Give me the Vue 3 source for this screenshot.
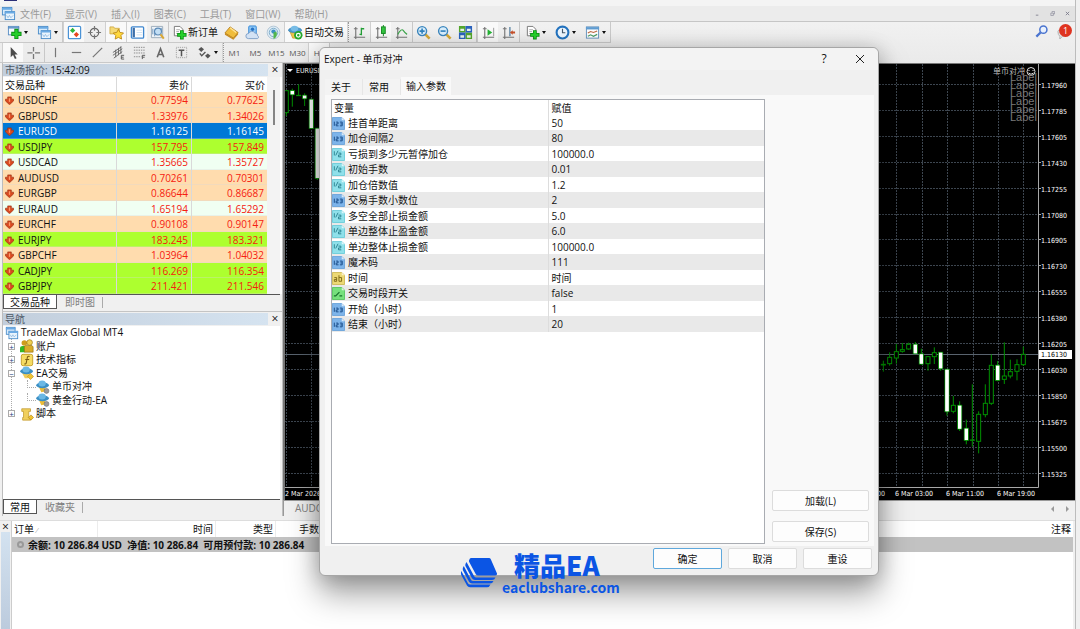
<script setup>
const menus = ['文件(F)', '显示(V)', '插入(I)', '图表(C)', '工具(T)', '窗口(W)', '帮助(H)']

const tools = [
  { icon: 'newchart', drop: true, label: '新图表' },
  { icon: 'profiles', drop: true, label: '配置' },
  { sep: true },
  { icon: 'watch', on: true, label: '市场报价' },
  { icon: 'target', label: '数据窗口' },
  { icon: 'star', on: true, label: '导航' },
  { icon: 'panel', on: true, label: '终端' },
  { icon: 'tester', label: '测试' },
  { sep: true },
  { icon: 'order', text: '新订单' },
  { icon: 'book', label: '编辑器' },
  { icon: 'cloud', label: '云' },
  { icon: 'signal', label: '信号' },
  { icon: 'auto', text: '自动交易', on: true },
  { sep: true, grip: true },
  { icon: 'bars', label: '柱状图' },
  { icon: 'candles', on: true, label: '蜡烛图' },
  { icon: 'linechart', label: '折线图' },
  { sep: true },
  { icon: 'zoomin', label: '放大' },
  { icon: 'zoomout', label: '缩小' },
  { icon: 'tiles', label: '平铺' },
  { sep: true },
  { icon: 'scroll', on: true, label: '自动滚动' },
  { icon: 'shift', label: '图表平移' },
  { sep: true },
  { icon: 'order', drop: true, label: '指标' },
  { icon: 'clock', drop: true, label: '时间周期' },
  { icon: 'template', drop: true, label: '模板' },
]

const drawTools = [
  { icon: 'cursor', on: true, label: '光标' },
  { icon: 'cross', label: '十字线' },
  { sep: true },
  { icon: 'vline', label: '垂直线' },
  { icon: 'hline', label: '水平线' },
  { icon: 'trend', label: '趋势线' },
  { icon: 'channel', label: '通道' },
  { icon: 'fib', label: '斐波那契' },
  { icon: 'text', label: '文字' },
  { icon: 'textbox', label: '文字标签' },
  { icon: 'arrows', drop: true, label: '箭头' },
  { sep: true, grip: true },
]
const frames = ['M1', 'M5', 'M15', 'M30', 'H1']

const quotes = [
  ['USDCHF', '0.77594', '0.77625', 'peach'],
  ['GBPUSD', '1.33976', '1.34026', 'peach'],
  ['EURUSD', '1.16125', '1.16145', 'picked'],
  ['USDJPY', '157.795', '157.849', 'lime'],
  ['USDCAD', '1.35665', '1.35727', 'mint'],
  ['AUDUSD', '0.70261', '0.70301', 'peach'],
  ['EURGBP', '0.86644', '0.86687', 'peach'],
  ['EURAUD', '1.65194', '1.65292', 'mint'],
  ['EURCHF', '0.90108', '0.90147', 'peach'],
  ['EURJPY', '183.245', '183.321', 'lime'],
  ['GBPCHF', '1.03964', '1.04032', 'peach'],
  ['CADJPY', '116.269', '116.354', 'lime'],
  ['GBPJPY', '211.421', '211.546', 'lime'],
]

const tree = [
  { t: 'TradeMax Global MT4', icon: 'profiles', level: 0 },
  { t: '账户', icon: 'users', level: 1, box: '+' },
  { t: '技术指标', icon: 'func', level: 1, box: '+' },
  { t: 'EA交易', icon: 'expert', level: 1, box: '-' },
  { t: '单币对冲', icon: 'expertgrey', level: 2 },
  { t: '黄金行动-EA', icon: 'expertgrey', level: 2 },
  { t: '脚本', icon: 'script', level: 1, box: '+' },
]

const params = [
  ['int', '挂首单距离', '50'],
  ['int', '加仓间隔2', '80'],
  ['dbl', '亏损到多少元暂停加仓', '100000.0'],
  ['dbl', '初始手数', '0.01'],
  ['dbl', '加仓倍数值', '1.2'],
  ['int', '交易手数小数位', '2'],
  ['dbl', '多空全部止损金额', '5.0'],
  ['dbl', '单边整体止盈金额', '6.0'],
  ['dbl', '单边整体止损金额', '100000.0'],
  ['int', '魔术码', '111'],
  ['str', '时间', '时间'],
  ['bool', '交易时段开关', 'false'],
  ['int', '开始（小时）', '1'],
  ['int', '结束（小时）', '20'],
]

const prices = ['1.17960', '1.17785', '1.17605', '1.17430', '1.17255', '1.17080', '1.16905', '1.16730',
  '1.16555', '1.16380', '1.16205', '1.16030', '1.15850', '1.15675', '1.15500', '1.15325']
const priceY = i => Math.round(20 + i * 25.9) + 0.5
const gridX = Array.from({ length: 30 }, (_, i) => Math.round(1 + i * 25.43) + 0.5)

// [x, high, bodyTop, bodyBottom, low, falling]
const leftCandles = [
  [859, 92, 92, 158, 168, 0], [877, 86, 92, 104, 140, 1], [896, 73, 106, 107, 108, 0],
  [914, 100, 106, 116, 138, 1], [934, 118, 118, 205, 205, 1], [952, 205, 205, 355, 360, 1],
]
const rightCandles = [
  [40, 122, 133, 135, 155, 0], [59, 97, 112, 131, 137, 0], [79, 72, 95, 114, 131, 0],
  [97, 69, 89, 94, 98, 0], [116, 68, 73, 87, 89, 0], [136, 66, 73, 101, 101, 1],
  [154, 86, 102, 132, 135, 1], [174, 110, 110, 131, 152, 0], [193, 82, 98, 110, 132, 0],
  [212, 97, 97, 146, 152, 1], [231, 148, 148, 275, 287, 1], [250, 228, 256, 274, 280, 0],
  [269, 244, 256, 327, 333, 1], [289, 299, 325, 361, 373, 1], [307, 193, 360, 361, 380, 0],
  [326, 274, 283, 364, 400, 0], [346, 193, 250, 284, 292, 0], [364, 103, 136, 250, 255, 0],
  [383, 123, 136, 181, 184, 1], [403, 67, 168, 178, 192, 0], [421, 119, 155, 168, 175, 0],
  [441, 118, 134, 154, 181, 0], [460, 80, 103, 134, 138, 0],
]
</script>

<template>
  <svg class="defs" aria-hidden="true">
    <symbol id="i-newchart" viewBox="0 0 16 16">
      <rect x="1.5" y="1.500" width="11" height="9" fill="#f4f9fe" stroke="#5a8fc4" />
      <path d="M1 3h12" stroke="#5a8fc4" stroke-width="1.500" />
      <path d="M10 4v11M4.500 9.500h11" stroke="#0a8f12" stroke-width="4.400" />
      <path d="M10 5v9M5.500 9.500h9" stroke="#25cf2b" stroke-width="2.600" />
    </symbol>
    <symbol id="i-profiles" viewBox="0 0 16 16">
      <rect x="1.500" y="1.500" width="10" height="8" fill="#d8ebfb" stroke="#4a8cc9" />
      <rect x="4.500" y="6" width="10" height="8.500" fill="#e9f4fd" stroke="#4a8cc9" />
      <path d="M1 3h11M4 7h11" stroke="#6aaae4" stroke-width="2" />
      <path d="M6 10l1.500 2.500L9 10l1.500 2.500L13 10" fill="none" stroke="#85b3dc" stroke-width=".8" />
    </symbol>
    <symbol id="i-watch" viewBox="0 0 16 16">
      <rect x="1.500" y="1.500" width="13" height="13" rx="1" fill="#fff" stroke="#4b93d6" stroke-width="1.300" />
      <path d="M6 3l2.800 2.800L6 8.600 3.200 5.800z" fill="#2fb53b" />
      <path d="M10 7.400l2.800 2.800L10 13l-2.800-2.800z" fill="#e8461e" />
    </symbol>
    <symbol id="i-target" viewBox="0 0 16 16">
      <circle cx="8" cy="8" r="4.500" fill="none" stroke="#666" stroke-width="1.300" />
      <path d="M8 1v5M8 10v5M1 8h5M10 8h5" stroke="#777" stroke-width="1.300" />
    </symbol>
    <symbol id="i-star" viewBox="0 0 16 16">
      <path d="M1 2h4l1 1.500h5v6H1z" fill="#f5da76" stroke="#c9a13a" stroke-width=".8" />
      <path d="M10 4.500l1.700 3.400 3.800.6-2.700 2.700.6 3.800-3.400-1.800L6.600 15l.6-3.800L4.500 8.500l3.800-.6z" fill="#ffd83d" stroke="#b98512" stroke-width=".9" />
    </symbol>
    <symbol id="i-panel" viewBox="0 0 16 16">
      <rect x="1.500" y="2" width="13" height="12" rx="1" fill="#fff" stroke="#3f87cf" stroke-width="1.400" />
      <path d="M4 3v10" stroke="#3d6fa9" stroke-width="2.500" />
      <path d="M7 5.500h6M7 8h6M7 10.500h6" stroke="#cfe1f2" />
    </symbol>
    <symbol id="i-tester" viewBox="0 0 16 16">
      <path d="M1.500 1.500h12v12h-12z" fill="#eef3f8" stroke="#9aabba" />
      <path d="M3 10V4M5 12V6M12 7V3" stroke="#6d95bd" />
      <circle cx="8.500" cy="7" r="3.700" fill="#c3dff5" stroke="#5a89b6" stroke-width="1.200" />
      <path d="M11.200 10l3.500 4.500" stroke="#dba733" stroke-width="2.200" />
    </symbol>
    <symbol id="i-order" viewBox="0 0 16 16">
      <path d="M2.500 1.500h6l3 3v7h-9z" fill="#fff" stroke="#777" />
      <path d="M4.500 5h4M4.500 7h3M4.500 9h2" stroke="#9a9a9a" stroke-width=".8" />
      <path d="M10.500 5.500v10M5.500 10.500h10" stroke="#0a8f12" stroke-width="4" />
      <path d="M10.500 6.500v8M6.500 10.500h8" stroke="#25cf2b" stroke-width="2.400" />
    </symbol>
    <symbol id="i-book" viewBox="0 0 16 16">
      <path d="M6.500 2L15 8l-5 6L1 8.500z" fill="#f0bd3c" stroke="#b27a16" stroke-width=".9" />
      <path d="M1 8.500l9 5.500 5-6v2L10 15.800 1 10.500z" fill="#c78c21" />
      <path d="M6.500 3L13 8" stroke="#ffe394" stroke-width="1.500" />
    </symbol>
    <symbol id="i-cloud" viewBox="0 0 16 16">
      <rect x="4" y="1" width="8" height="9" rx="1" fill="#8fc8f6" stroke="#2f86d6" />
      <circle cx="8" cy="4.500" r="1.800" fill="#2873c4" />
      <path d="M3.500 14.500a2.700 2.700 0 01.3-5.400A3.800 3.800 0 0110.500 8.500a3 3 0 013 3 1.600 1.600 0 01-.3 3z" fill="#d3e2f4" stroke="#7e9fc8" />
    </symbol>
    <symbol id="i-signal" viewBox="0 0 16 16">
      <circle cx="8" cy="8" r="6.800" fill="#dcebf5" stroke="#a3b9cc" stroke-width=".8" />
      <circle cx="8" cy="8" r="4.500" fill="none" stroke="#7dabc9" />
      <circle cx="8" cy="7" r="2.300" fill="#3c90c4" />
      <path d="M8 8l3-1a6 6 0 01-3 8z" fill="#51b64d" />
    </symbol>
    <symbol id="i-auto" viewBox="0 0 16 16">
      <path d="M2 7h10l-2 7H5z" fill="#eec448" stroke="#b48a1b" stroke-width=".6" />
      <ellipse cx="7.500" cy="5.500" rx="7" ry="2.800" fill="#4c9bd0" stroke="#2e77ab" stroke-width=".6" />
      <ellipse cx="7" cy="3.800" rx="4" ry="3" fill="#77bce6" />
      <circle cx="11" cy="11" r="4.500" fill="#24a82c" />
      <circle cx="11" cy="11" r="2" fill="none" stroke="#fff" stroke-width="1.300" />
    </symbol>
    <symbol id="i-bars" viewBox="0 0 16 16">
      <path d="M4 2v13M2 13h12M2 4h4" stroke="#777" stroke-width="1.200" />
      <path d="M10 3v8M8 10h2M10 4h3" stroke="#24a037" stroke-width="1.400" />
    </symbol>
    <symbol id="i-candles" viewBox="0 0 16 16">
      <path d="M4 2v13M2 13h12M2 4h4" stroke="#777" stroke-width="1.200" />
      <path d="M10 0v12" stroke="#178a23" /><rect x="8" y="2" width="4" height="7" fill="#35c541" stroke="#178a23" />
    </symbol>
    <symbol id="i-linechart" viewBox="0 0 16 16">
      <path d="M4 2v13M2 13h12M2 4h4" stroke="#777" stroke-width="1.200" />
      <path d="M4 10q4-7 6-4t4 4" fill="none" stroke="#3da64b" stroke-width="1.200" />
    </symbol>
    <symbol id="i-zoomin" viewBox="0 0 16 16">
      <path d="M10 10l4.500 4.500" stroke="#d5a835" stroke-width="2.800" />
      <circle cx="6.500" cy="6.500" r="4.800" fill="#d8edfb" stroke="#3b86bd" stroke-width="1.500" />
      <path d="M6.500 3.800v5.400M3.800 6.500h5.400" stroke="#2f82bd" stroke-width="1.700" />
    </symbol>
    <symbol id="i-zoomout" viewBox="0 0 16 16">
      <path d="M10 10l4.500 4.500" stroke="#d5a835" stroke-width="2.800" />
      <circle cx="6.500" cy="6.500" r="4.800" fill="#d8edfb" stroke="#3b86bd" stroke-width="1.500" />
      <path d="M3.800 6.500h5.400" stroke="#2f82bd" stroke-width="1.700" />
    </symbol>
    <symbol id="i-tiles" viewBox="0 0 16 16">
      <path d="M1 1h7v7H1zM8 8h7v7H8z" fill="#53a62c" /><path d="M8 1h7v7H8zM1 8h7v7H1z" fill="#2b62bd" />
      <path d="M2.500 4h4v2.500h-4zM9.500 4h4v2.500h-4zM2.500 11h4v2.500h-4zM9.500 11h4v2.500h-4z" fill="#e6f2e8" />
    </symbol>
    <symbol id="i-scroll" viewBox="0 0 16 16">
      <path d="M4 2v13M2 13h12M2 4h4" stroke="#777" stroke-width="1.200" />
      <path d="M13.500 3v9" stroke="#999" /><path d="M7 4.500l5 3.500-5 3.500z" fill="#26b336" />
    </symbol>
    <symbol id="i-shift" viewBox="0 0 16 16">
      <path d="M4 2v13M2 13h12M2 4h4" stroke="#777" stroke-width="1.200" />
      <path d="M9.500 2v10" stroke="#4d7a9c" stroke-width="1.300" /><path d="M9.500 8l3-2.500V7H15v2h-2.500v1.500z" fill="#c6502b" />
    </symbol>
    <symbol id="i-clock" viewBox="0 0 16 16">
      <circle cx="8" cy="8" r="6.300" fill="#edf6fe" stroke="#2373bf" stroke-width="2.200" />
      <path d="M8 4v4.300h3" fill="none" stroke="#44596c" stroke-width="1.200" />
    </symbol>
    <symbol id="i-template" viewBox="0 0 16 16">
      <rect x="1.500" y="2" width="13" height="12" fill="#fff" stroke="#6393bd" />
      <path d="M1 3.500h14" stroke="#5f9cd1" stroke-width="2.500" />
      <path d="M3 8.500l3-1.500 3 1 4-1.500" fill="none" stroke="#c06943" stroke-width="1.200" />
      <path d="M3 12l3-1.500 3 1.500 4-2" fill="none" stroke="#4b9c66" stroke-width="1.200" />
    </symbol>
    <symbol id="i-cursor" viewBox="0 0 16 16"><path d="M5 2v11l2.500-2.300L9.500 15l1.800-.9-2-4L12.500 10z" fill="#4b4b4b" /></symbol>
    <symbol id="i-cross" viewBox="0 0 16 16"><path d="M8 2v5M8 9.500V15M1.500 8.300H7M9.500 8.300H15" stroke="#777" stroke-width="1.400" /></symbol>
    <symbol id="i-vline" viewBox="0 0 16 16"><path d="M8 3v10" stroke="#777" stroke-width="1.300" /></symbol>
    <symbol id="i-hline" viewBox="0 0 16 16"><path d="M3 8h10" stroke="#777" stroke-width="1.300" /></symbol>
    <symbol id="i-trend" viewBox="0 0 16 16"><path d="M3 13L13 3" stroke="#777" stroke-width="1.300" /></symbol>
    <symbol id="i-channel" viewBox="0 0 16 16">
      <path d="M2 8l9-6M2 11l10-7M3 14l9-7M5 5v8M8 3v8M10.500 1.500v8" stroke="#666" />
      <path d="M14 11h-3v4h3M11 13h2.500" fill="none" stroke="#555" />
    </symbol>
    <symbol id="i-fib" viewBox="0 0 16 16">
      <path d="M2 2.500h12M2 5.500h12M2 8.500h12M2 12.500h8" stroke="#888" stroke-dasharray="1.500 1" />
      <path d="M14 11h-3v4M11 13h2.500" fill="none" stroke="#555" />
    </symbol>
    <symbol id="i-text" viewBox="0 0 16 16"><path d="M4.500 13L8 4l3.500 9M5.800 10.200h4.500" fill="none" stroke="#666" stroke-width="1.700" /></symbol>
    <symbol id="i-textbox" viewBox="0 0 16 16">
      <rect x="2.500" y="2.500" width="11" height="11" fill="none" stroke="#999" stroke-dasharray="1 1" />
      <path d="M5 5.500h6M8 5.500V12" stroke="#555" stroke-width="1.600" />
    </symbol>
    <symbol id="i-arrows" viewBox="0 0 16 16">
      <path d="M4.500 2L7.500 4.500 4.500 7.500 1.500 4.500z" fill="#555" /><path d="M3 9l2 2.500 4-4" fill="none" stroke="#555" stroke-width="1.400" />
      <path d="M11.500 9l3 2.500-3 3-3-3z" fill="#555" />
    </symbol>
    <symbol id="i-users" viewBox="0 0 16 16">
      <path d="M0 15V10q0-2 3-2h3v7z" fill="#36b824" /><circle cx="5" cy="4.500" r="3.200" fill="#cf9d1d" />
      <path d="M5 15V9q0-2 5-2t5 2v6z" fill="#d9ab28" stroke="#936c0d" stroke-width=".7" />
      <circle cx="11" cy="4" r="3.200" fill="#f0cf50" stroke="#936c0d" stroke-width=".7" />
    </symbol>
    <symbol id="i-func" viewBox="0 0 16 16">
      <rect x="1.500" y="1.500" width="13" height="13" rx="2" fill="#f5db63" stroke="#c49d24" />
      <path d="M11 4q-2.500-1-2.800 2l-1 5q-.4 2-2.200 1.300M6 7.500h4.500" fill="none" stroke="#7a5d12" stroke-width="1.200" />
    </symbol>
    <symbol id="i-expert" viewBox="0 0 16 16">
      <path d="M2 7h9l-2 7H5.500z" fill="#f0cc5a" />
      <ellipse cx="7.500" cy="6" rx="7.300" ry="3.300" fill="#3b8fc4" /><ellipse cx="7" cy="4" rx="4.200" ry="3.300" fill="#6bb8e4" />
      <path d="M12 8.500l3.500 3.500-3.500 3.500L8.500 12z" fill="#efc331" stroke="#b98b16" stroke-width=".7" />
    </symbol>
    <symbol id="i-expertgrey" viewBox="0 0 16 16">
      <path d="M3 7h8l-1 6-4 1z" fill="#edbd37" />
      <ellipse cx="7.500" cy="6" rx="7.300" ry="3.300" fill="#3b8fc4" /><ellipse cx="7" cy="4" rx="4.200" ry="3.300" fill="#6bb8e4" />
      <circle cx="12" cy="12.500" r="2.800" fill="#9b9b9b" stroke="#6f6f6f" stroke-width=".7" />
    </symbol>
    <symbol id="i-script" viewBox="0 0 16 16">
      <path d="M2 2h10v3h-2v7h2v3H3v-3h1V5H2z" fill="#f0cf5d" stroke="#bd9427" stroke-width=".8" />
      <path d="M12.500 9l3 3-3 3-3-3z" fill="#efc331" stroke="#a97d10" stroke-width=".7" />
    </symbol>
    <symbol id="i-int" viewBox="0 0 14 14">
      <path d="M.5.5h10l3 3v10H.5z" fill="#7db4ea" stroke="#6ba3da" /><path d="M10.500.5v3h3" fill="#d7e9fa" />
      <path d="M2.500 5v4.500M4.500 5.500h2v2h-2v2h2.500M8.500 5.500h2.500v4H8.500M9 7.500h2" fill="none" stroke="#174a86" />
    </symbol>
    <symbol id="i-dbl" viewBox="0 0 14 14">
      <path d="M.5.5h10l3 3v10H.5z" fill="#8fe0ea" stroke="#6acbd8" /><path d="M10.500.5v3h3" fill="#dcf8fb" />
      <path d="M2.500 3.500v4.500M4 8l2.500-5M7 5.500h2.500v2H7v2h3" fill="none" stroke="#28818f" />
    </symbol>
    <symbol id="i-str" viewBox="0 0 14 14">
      <path d="M.5.5h10l3 3v10H.5z" fill="#ecd975" stroke="#cdb954" /><path d="M10.500.5v3h3" fill="#fbf4cb" />
      <path d="M2.500 6h2.500v4H2.500V8H5M7.500 3.500V10h2.800V6H7.500" fill="none" stroke="#7b6713" />
    </symbol>
    <symbol id="i-bool" viewBox="0 0 14 14">
      <path d="M.5.5h10l3 3v10H.5z" fill="#76e07c" stroke="#56c45f" /><path d="M10.500.5v3h3" fill="#d4f8d6" />
      <path d="M2 9.500h2l4-4M8 9.500h3" fill="none" stroke="#16702a" stroke-width="1.300" />
    </symbol>
    <symbol id="i-down" viewBox="0 0 10 10">
      <path d="M3 1h4v2.500h2.500v2L5 9.700.5 5.500v-2H3z" fill="#d8481f" stroke="#9c3113" stroke-width=".7" />
      <path d="M5 2.500v4" fill="none" stroke="#ff9a6c" stroke-width="1.500" />
    </symbol>
  </svg>

  <div class="window">
    <div class="titlebar"><span class="appmark"></span></div>
    <nav class="menubar">
      <svg class="ico"><use href="#i-profiles" /></svg>
      <button v-for="m in menus" :key="m">{{ m }}</button>
      <div class="winbtns">
        <button aria-label="最小化"><svg viewBox="0 0 6 6"><path d="M1 5h3" stroke="#778" /></svg></button>
        <button aria-label="还原"><svg viewBox="0 0 6 6"><path d="M1 2.500h3v3H1zM2.500 2V.5h3v3H4" fill="none" stroke="#889" stroke-width=".8" /></svg></button>
        <button aria-label="关闭"><svg viewBox="0 0 6 6"><path d="M1 1l4 4M5 1L1 5" stroke="#778" /></svg></button>
      </div>
    </nav>

    <div class="bars">
      <div class="toolbar">
        <template v-for="(t, i) in tools" :key="i">
          <span v-if="t.sep" class="sep" :class="{ grip: t.grip }"></span>
          <button v-else :class="{ on: t.on, drop: t.drop, worded: t.text }" :aria-label="t.label || t.text">
            <svg class="ico"><use :href="'#i-' + t.icon" /></svg>
            <span v-if="t.text">{{ t.text }}</span>
            <i v-if="t.drop" class="caret"></i>
          </button>
        </template>
      </div>
      <div class="toolbar second">
        <template v-for="(t, i) in drawTools" :key="i">
          <span v-if="t.sep" class="sep" :class="{ grip: t.grip }"></span>
          <button v-else :class="{ on: t.on, drop: t.drop }" :aria-label="t.label">
            <svg class="ico"><use :href="'#i-' + t.icon" /></svg>
            <i v-if="t.drop" class="caret"></i>
          </button>
        </template>
        <button v-for="f in frames" :key="f" class="frame" :class="{ on: f === 'H1' }">{{ f }}</button>
      </div>
      <div class="corner">
        <button aria-label="搜索">
          <svg class="ico" viewBox="0 0 16 16"><circle cx="10" cy="6" r="3.800" fill="#e9f1fd" stroke="#4a74cf" stroke-width="1.600" /><path d="M7 9l-4.500 4.500" stroke="#4a74cf" stroke-width="2.400" /></svg>
        </button>
        <button class="bell" aria-label="通知">
          <svg class="ico" viewBox="0 0 16 16"><path d="M1 8q0-2 3-2h6q3 0 3 3v1q0 3-3 3H6l-3 3V13Q1 12 1 8z" fill="#e2e2e2" stroke="#b0b0b0" /></svg>
          <span class="badge">1</span>
        </button>
      </div>
    </div>

    <div class="main">
      <aside class="left">
        <section class="market">
          <header class="phead"><h2>市场报价: <b>15:42:09</b></h2><button aria-label="关闭">×</button></header>
          <div class="listwrap">
            <table class="quotes">
              <thead><tr><th>交易品种</th><th>卖价</th><th>买价</th></tr></thead>
              <tbody>
                <tr v-for="q in quotes" :key="q[0]" :class="q[3]">
                  <td><svg class="mini"><use href="#i-down" /></svg>{{ q[0] }}</td><td>{{ q[1] }}</td><td>{{ q[2] }}</td>
                </tr>
              </tbody>
            </table>
            <div class="scroll"><span></span></div>
          </div>
          <div class="tabs"><button class="act">交易品种</button><button>即时图</button></div>
        </section>
        <section class="navi">
          <header class="phead"><h2>导航</h2><button aria-label="关闭">×</button></header>
          <ul class="tree">
            <li v-for="n in tree" :key="n.t" :class="'lv' + n.level">
              <span v-if="n.box" class="box">{{ n.box === '+' ? '+' : '−' }}</span>
              <svg class="tico"><use :href="'#i-' + n.icon" /></svg>{{ n.t }}
            </li>
          </ul>
          <div class="tabs"><button class="act short">常用</button><button>收藏夹</button></div>
        </section>
      </aside>

      <section class="chartcol">
        <div class="chart">
          <svg viewBox="0 0 790 436" preserveAspectRatio="xMaxYMin slice">
            <rect width="790" height="436" fill="#000" />
            <g class="grid">
              <path v-for="x in gridX" :key="x" :d="`M${x} 0V423`" />
              <path v-for="(p, i) in prices" :key="p" :d="`M0 ${priceY(i)}H753`" />
            </g>
            <path d="M0 290.500H753" stroke="#59636e" />
            <path d="M753.500 0V423.500H0" fill="none" stroke="#a8a8a8" />
            <g v-for="(set, s) in [leftCandles, rightCandles]" :key="s" :transform="s ? 'translate(585 256) scale(.3333)' : 'translate(-285 -4) scale(.3333)'" stroke="#009200" stroke-width="3">
              <template v-for="c in set" :key="c[0]">
                <path :d="`M${c[0]} ${c[1]}V${c[4]}`" />
                <rect :x="c[0] - 6" :y="c[2]" width="12" :height="c[3] - c[2]" :fill="c[5] ? '#fff' : '#000'" />
                <rect v-if="c[5]" :x="c[0] - 5" :y="c[2] + 1" width="10" :height="c[3] - c[2] - 2" fill="#fff" stroke="none" />
              </template>
            </g>
            <g class="axis">
              <g v-for="(p, i) in prices" :key="p">
                <path :d="`M753 ${priceY(i)}h3`" stroke="#a8a8a8" />
                <text x="756" :y="priceY(i) + 3">{{ p }}</text>
              </g>
              <rect x="754" y="286" width="33" height="9" fill="#fff" />
              <text x="756" y="293" class="dark">1.16130</text>
              <text x="0" y="432">2 Mar 2026</text>
              <text x="600" y="432" text-anchor="end">5 Mar 19:00</text>
              <text x="610" y="432">6 Mar 03:00</text>
              <text x="661" y="432">6 Mar 11:00</text>
              <text x="712" y="432">6 Mar 19:00</text>
              <path d="M2 5h6l-3 3z" fill="#fff" />
              <text x="11" y="9">EURUSD,H1</text>
              <text x="708" y="10" class="ea">单币对冲</text>
              <g fill="none" stroke="#ddd"><circle cx="746" cy="7.500" r="4" /><path d="M744 6v1M748 6v1M743.500 9q2.500 2.500 5 0" /></g>
              <text v-for="k in 6" :key="k" x="725" :y="9 + k * 8" class="lbl">Label</text>
            </g>
          </svg>
        </div>
        <div class="charttabs"><button>AUDCAD,H1</button><span class="arrows"><i></i><i class="r"></i></span></div>
      </section>
    </div>

    <section class="terminal">
      <div class="gutter"><button aria-label="关闭">×</button><span></span></div>
      <div class="orders">
        <div class="ohead"><span>订单 <small>⁄</small></span><span>时间</span><span>类型</span><span>手数</span><span>注释</span></div>
        <div class="balance"><i></i><b>余额: 10 286.84 USD&nbsp; 净值: 10 286.84&nbsp; 可用预付款: 10 286.84</b></div>
      </div>
    </section>

    <div class="dialog" role="dialog" aria-label="Expert - 单币对冲">
      <header><h1>Expert - 单币对冲</h1>
        <button aria-label="帮助">?</button>
        <button aria-label="关闭"><svg viewBox="0 0 10 10"><path d="M1 1l8 8M9 1L1 9" stroke="#222" /></svg></button>
      </header>
      <div class="dtabs"><button>关于</button><button>常用</button><button class="act">输入参数</button></div>
      <div class="page">
        <div class="plist">
          <table>
            <thead><tr><th>变量</th><th>赋值</th></tr></thead>
            <tbody>
              <tr v-for="p in params" :key="p[1]">
                <td><svg class="pico"><use :href="'#i-' + p[0]" /></svg>{{ p[1] }}</td><td>{{ p[2] }}</td>
              </tr>
            </tbody>
          </table>
        </div>
        <div class="side"><button>加载(L)</button><button>保存(S)</button></div>
      </div>
      <footer><button class="main-btn">确定</button><button>取消</button><button>重设</button></footer>
    </div>

    <div class="brand">
      <svg viewBox="0 0 36 32">
        <path d="M10 1h18q1.200 0 1.800 1.200L36 16.500q.3 2-2 2H17q-1.500 0-2.200-1.300L8.200 5q-.5-1 0-2Q8.800 1 10 1z" />
        <path d="M5.500 5l7.500 14q.8 1.500 2.500 1.500h19q-1 2.500-3.500 2.500H14q-2 0-3-1.800L4.300 8.800Q4 7 5.500 5z" />
        <path d="M2.800 9l7 13.500q.8 1.600 2.500 1.600H32.500q-1 2.500-3.500 2.500H11q-2 0-3-1.800L1.800 13Q1.300 11 2.800 9z" />
        <path d="M.3 14l6.500 12q.8 1.600 2.500 1.600H29.500q-1 2.700-3.500 2.700H9q-2 0-3-1.800L.3 18Q-.5 16 .3 14z" />
      </svg>
      <div><strong>精品EA</strong><span>eaclubshare.com</span></div>
    </div>
  </div>
</template>

<style>
body { margin: 0; overflow: hidden; background: #f0f0f0; }
</style>

<style scoped>
.defs { position: absolute; width: 0; height: 0; }
.window {
  position: relative; display: flex; flex-direction: column; box-sizing: border-box; height: 100vh;
  border-right: 1px solid #bcbcbc; margin-right: 4px; background: #f0f0f0; color: #111;
  font: 10px/14px "Open Sans", "Noto Sans CJK SC", sans-serif;
}
button { margin: 0; padding: 0; border: 0; background: none; font: inherit; color: inherit; }
h1, h2 { margin: 0; font: inherit; }
svg { display: block; flex: none; }
.ico { width: 15px; height: 15px; }

.titlebar { height: 6px; flex: none; background: #f4f4f4; }
.appmark { display: block; width: 13px; height: 1px; margin-left: 4px; background: #2b2f77; }
.menubar { display: flex; align-items: center; flex: none; height: 15px; padding-left: 1px; background: #ececec; border-bottom: 1px solid #c6c6c6; color: #9a9a9a; }
.menubar > button { margin-left: 4px; margin-right: 10px; white-space: nowrap; }
.winbtns { display: flex; margin-left: auto; height: 15px; background: #e2e2e2; }
.winbtns button { width: 15px; display: flex; align-items: center; justify-content: center; }
.winbtns svg { width: 5px; height: 5px; }

.bars { position: relative; flex: none; background: linear-gradient(#f1f1f1, #eaeaea); }
.toolbar { display: flex; box-sizing: border-box; width: max-content; height: 21px; padding-left: 2px; border-bottom: 1px solid #c9c9c9; border-right: 1px solid #c9c9c9; }
.toolbar.second { height: 20px; }
.toolbar button { display: flex; align-items: center; justify-content: center; width: 21px; box-sizing: border-box; }
.toolbar button.drop { width: 30px; gap: 2px; }
.toolbar button.worded { width: auto; padding: 0 3px; gap: 1px; white-space: nowrap; }
.toolbar button.on { background: #f9f9f9; border-left: 1px solid #d0d0d0; }
.toolbar button.frame { font-size: 8px; color: #555; }
.caret { border: 2px solid transparent; border-top: 3px solid #111; border-bottom: 0; }
.sep { width: 1px; background: #c8c8c8; }
.sep.grip { border-left: 1px solid #d6d6d6; border-right: 1px dotted #999; background: none; width: 0; }
.corner { position: absolute; right: 3px; top: 2px; display: flex; gap: 8px; }
.bell { position: relative; }
.badge { position: absolute; right: 0; top: 0; width: 13px; height: 13px; border-radius: 7px; background: #df3320; color: #fff; font-size: 9px; line-height: 13px; text-align: center; }

.main { flex: 1; min-height: 0; display: flex; }
.left { width: 283px; flex: none; display: flex; flex-direction: column; box-sizing: border-box; padding-left: 2px; border-right: 1px solid #bdbdbd; }
.market { border-left: 1px solid #bcbcbc; border-bottom: 1px solid #c4c4c4; padding-top: 1px; }
.navi { border-left: 1px solid #bcbcbc; flex: 1; min-height: 0; display: flex; flex-direction: column; padding-top: 1px; }
.phead { display: flex; flex: none; height: 12px; line-height: 12px; margin-bottom: 1px; color: #4c5866; }
.phead h2 { flex: 1; padding-left: 2px; background: linear-gradient(90deg, #c2cedc, #d5e3f0); }
.phead b { font-weight: 400; color: #111; }
.phead button { width: 14px; font-size: 12px; color: #111; }
.listwrap { display: flex; background: #fff; }
.quotes { width: 264px; border-collapse: collapse; table-layout: fixed; }
.quotes th, .quotes td { box-sizing: border-box; height: 16px; padding: 0 3px; line-height: 14px; font-weight: 400; text-align: right; border-right: 1px solid #d9d9d9; }
.quotes tr:nth-child(even) td { height: 15px; }
.quotes th { height: 15px; padding-right: 2px; }
.quotes th:first-child, .quotes td:first-child { width: 113px; text-align: left; padding-left: 2px; }
.quotes th:last-child, .quotes td:last-child { border-right: 0; }
.quotes td:first-child { color: #111; }
.quotes td { color: #f52010; box-shadow: inset 0 -1px #d8d8d855; }
.mini { display: inline-block; width: 9px; height: 9px; margin: 0 4px 0 0; vertical-align: -1px; }
.peach { background: #ffdcae; } .lime { background: #adff2f; } .mint { background: #f0fff2; }
.picked { background: #0078d7; } .quotes .picked td { color: #fff; }
.scroll { flex: 1; padding: 13px 0 0 6px; background: #f3f3f3; margin-right: 2px; }
.scroll span { display: block; width: 2px; height: 35px; background: #858585; }
.tabs { display: flex; flex: none; height: 16px; margin-right: 2px; border-top: 1px solid #555; color: #808080; }
.tabs button { height: 14px; padding: 0 8px; line-height: 12px; position: relative; white-space: nowrap; }
.tabs button:not(.act)::after { content: ""; position: absolute; right: 0; top: 2px; height: 11px; border-right: 1px solid #aaa; }
.tabs .act { box-sizing: border-box; background: #fff; color: #111; border: 1px solid #555; border-top: 0; padding: 0 6px; }
.tree { flex: 1; margin: 0 2px 0 0; padding: 0; list-style: none; background: #fff; overflow: hidden; position: relative; }
.tree::before { content: ""; position: absolute; left: 8px; top: 12px; height: 74px; border-left: 1px dotted #aaa; }
.tree li { position: relative; display: flex; align-items: center; height: 14px; line-height: 13px; white-space: nowrap; }
.tree li:nth-child(odd) { height: 13px; }
.tico { width: 14px; height: 14px; margin-right: 2px; }
.lv0 { padding-left: 2px; }
.lv1 { padding-left: 5px; }
.lv1 .tico { margin-left: 5px; }
.lv2 { padding-left: 33px; }
.lv2::before { content: ""; position: absolute; left: 24px; top: 0; height: 7px; width: 8px; border-left: 1px dotted #aaa; border-bottom: 1px dotted #aaa; }
.box { z-index: 1; box-sizing: border-box; width: 7px; height: 7px; border: 1px solid #aaa; background: #fff; color: #23407c; font-size: 8px; line-height: 5px; text-align: center; }

.chartcol { flex: 1; min-width: 0; display: flex; flex-direction: column; }
.chart { flex: 1; min-height: 0; border-top: 1px solid #777; border-left: 2px solid #777; background: #000; overflow: hidden; }
.chart svg { width: 100%; height: 100%; }
.grid path { stroke: #3d4650; stroke-dasharray: 2 1; }
.axis text { font: 7px "DejaVu Sans Condensed", "DejaVu Sans", sans-serif; fill: #fff; }
.axis .dark { fill: #000; }
.axis .ea { font: 8px "Noto Sans CJK SC", sans-serif; fill: #bbb; }
.axis .lbl { font: 11px "Liberation Sans", sans-serif; fill: #7b7b7b; }
.charttabs { display: flex; justify-content: space-between; height: 15px; flex: none; border-top: 1px solid #999; border-left: 1px solid #999; padding: 0 6px 0 11px; line-height: 15px; font-size: 10px; color: #808080; }
.arrows { display: flex; gap: 12px; padding-top: 5px; }
.arrows i { height: 0; border: 3px solid transparent; border-right: 3px solid #999; border-left: 0; }
.arrows .r { border-right: 0; border-left: 3px solid #999; }

.terminal { flex: none; display: flex; height: 108px; margin-top: 4px; border-top: 1px solid #ddd; padding-right: 2px; }
.gutter { width: 11px; flex: none; display: flex; flex-direction: column; border-right: 1px solid #ccc; }
.gutter button { font-size: 12px; line-height: 9px; height: 11px; }
.gutter span { flex: 1; margin: 0 1px; background: linear-gradient(#d3e2f0, #bccbdd); }
.orders { flex: 1; min-width: 0; background: #fff; }
.ohead { display: flex; height: 16px; line-height: 16px; }
.ohead span { box-sizing: border-box; padding: 0 2px; text-align: right; border-right: 1px solid #ececec; }
.ohead small { font-size: 8px; color: #aaa; }
.ohead span:nth-child(1) { width: 86px; text-align: left; }
.ohead span:nth-child(2) { width: 118px; }
.ohead span:nth-child(3) { width: 60px; }
.ohead span:nth-child(4) { width: 46px; }
.ohead span:nth-child(5) { flex: 1; border: 0; }
.balance { display: flex; align-items: center; height: 15px; gap: 4px; padding-left: 5px; background: #c2c2c2; white-space: nowrap; }
.balance i { box-sizing: border-box; width: 7px; height: 7px; border: 2px solid #999; border-radius: 4px; }

.dialog {
  position: absolute; left: 319px; right: 196px; top: 47px; bottom: 53px; box-sizing: border-box; display: flex; flex-direction: column;
  padding: 0 4px 0 5px; border: 1px solid #a6a6a6; border-radius: 6px; background: #f0f0f0;
  box-shadow: 0 18px 32px rgba(0, 0, 0, .36), 0 2px 20px rgba(0, 0, 0, .2);
}
.dialog header { display: flex; flex: none; align-items: center; height: 22px; margin: 0 -4px 0 -5px; padding-left: 4px; background: #f3f3f3; border-radius: 6px 6px 0 0; }
.dialog header h1 { flex: 1; }
.dialog header button { width: 36px; height: 22px; display: flex; align-items: center; justify-content: center; font-size: 12px; }
.dialog header svg { width: 10px; height: 10px; }
.dtabs { display: flex; align-items: flex-end; flex: none; height: 18px; margin-top: 7px; }
.dtabs button { height: 16px; width: 38px; padding: 0 5px 1px 0; background: #f3f3f3; border-right: 1px solid #e6e6e6; box-sizing: border-box; }
.dtabs .act { height: 18px; width: 50px; padding: 0 0 1px; background: #f9f9f9; border: 0; }
.page { flex: 1; min-height: 0; display: flex; gap: 7px; padding: 4px 5px 2px 6px; background: #f9f9f9; }
.plist { flex: 1; min-width: 0; background: #fff; border: 1px solid #a9acb2; }
.plist table { width: 100%; border-collapse: collapse; table-layout: fixed; }
.plist th, .plist td { box-sizing: border-box; height: 15px; padding: 0 3px; line-height: 14px; text-align: left; font-weight: 400; }
.plist tr:nth-child(even) td { height: 16px; background: #e9e9e9; }
.plist th { padding-left: 2px; }
.plist th:first-child { width: 216px; }
.plist th:last-child { padding-left: 3px; }
.plist th:first-child, .plist td:first-child { border-right: 1px solid #ddd; }
.plist td:first-child { padding-left: 0; }
.pico { display: inline-block; width: 13px; height: 13px; margin-right: 3px; vertical-align: -3px; }
.side { width: 97px; display: flex; flex-direction: column; justify-content: flex-end; gap: 10px; padding-bottom: 2px; }
.side button, footer button { box-sizing: border-box; height: 21px; border: 1px solid #dcdcdc; border-radius: 2px; background: #fdfdfd; }
footer { display: flex; flex: none; justify-content: flex-end; gap: 6px; padding: 2px 2px 6px 0; }
footer button { width: 69px; }
footer .main-btn { border-color: #5fa8dc; }

.brand { position: absolute; left: 461px; top: 550px; display: flex; gap: 5px; color: #0b55e4; font-family: "Noto Sans CJK SC", sans-serif; font-weight: 700; }
.brand svg { width: 36px; height: 32px; margin-top: 7px; fill: #0b55e4; }
.brand div { display: flex; flex-direction: column; align-items: flex-start; }
.brand strong { margin-left: 12px; font-size: 26px; line-height: 30px; }
.brand span { font-size: 14px; line-height: 14px; }
</style>
